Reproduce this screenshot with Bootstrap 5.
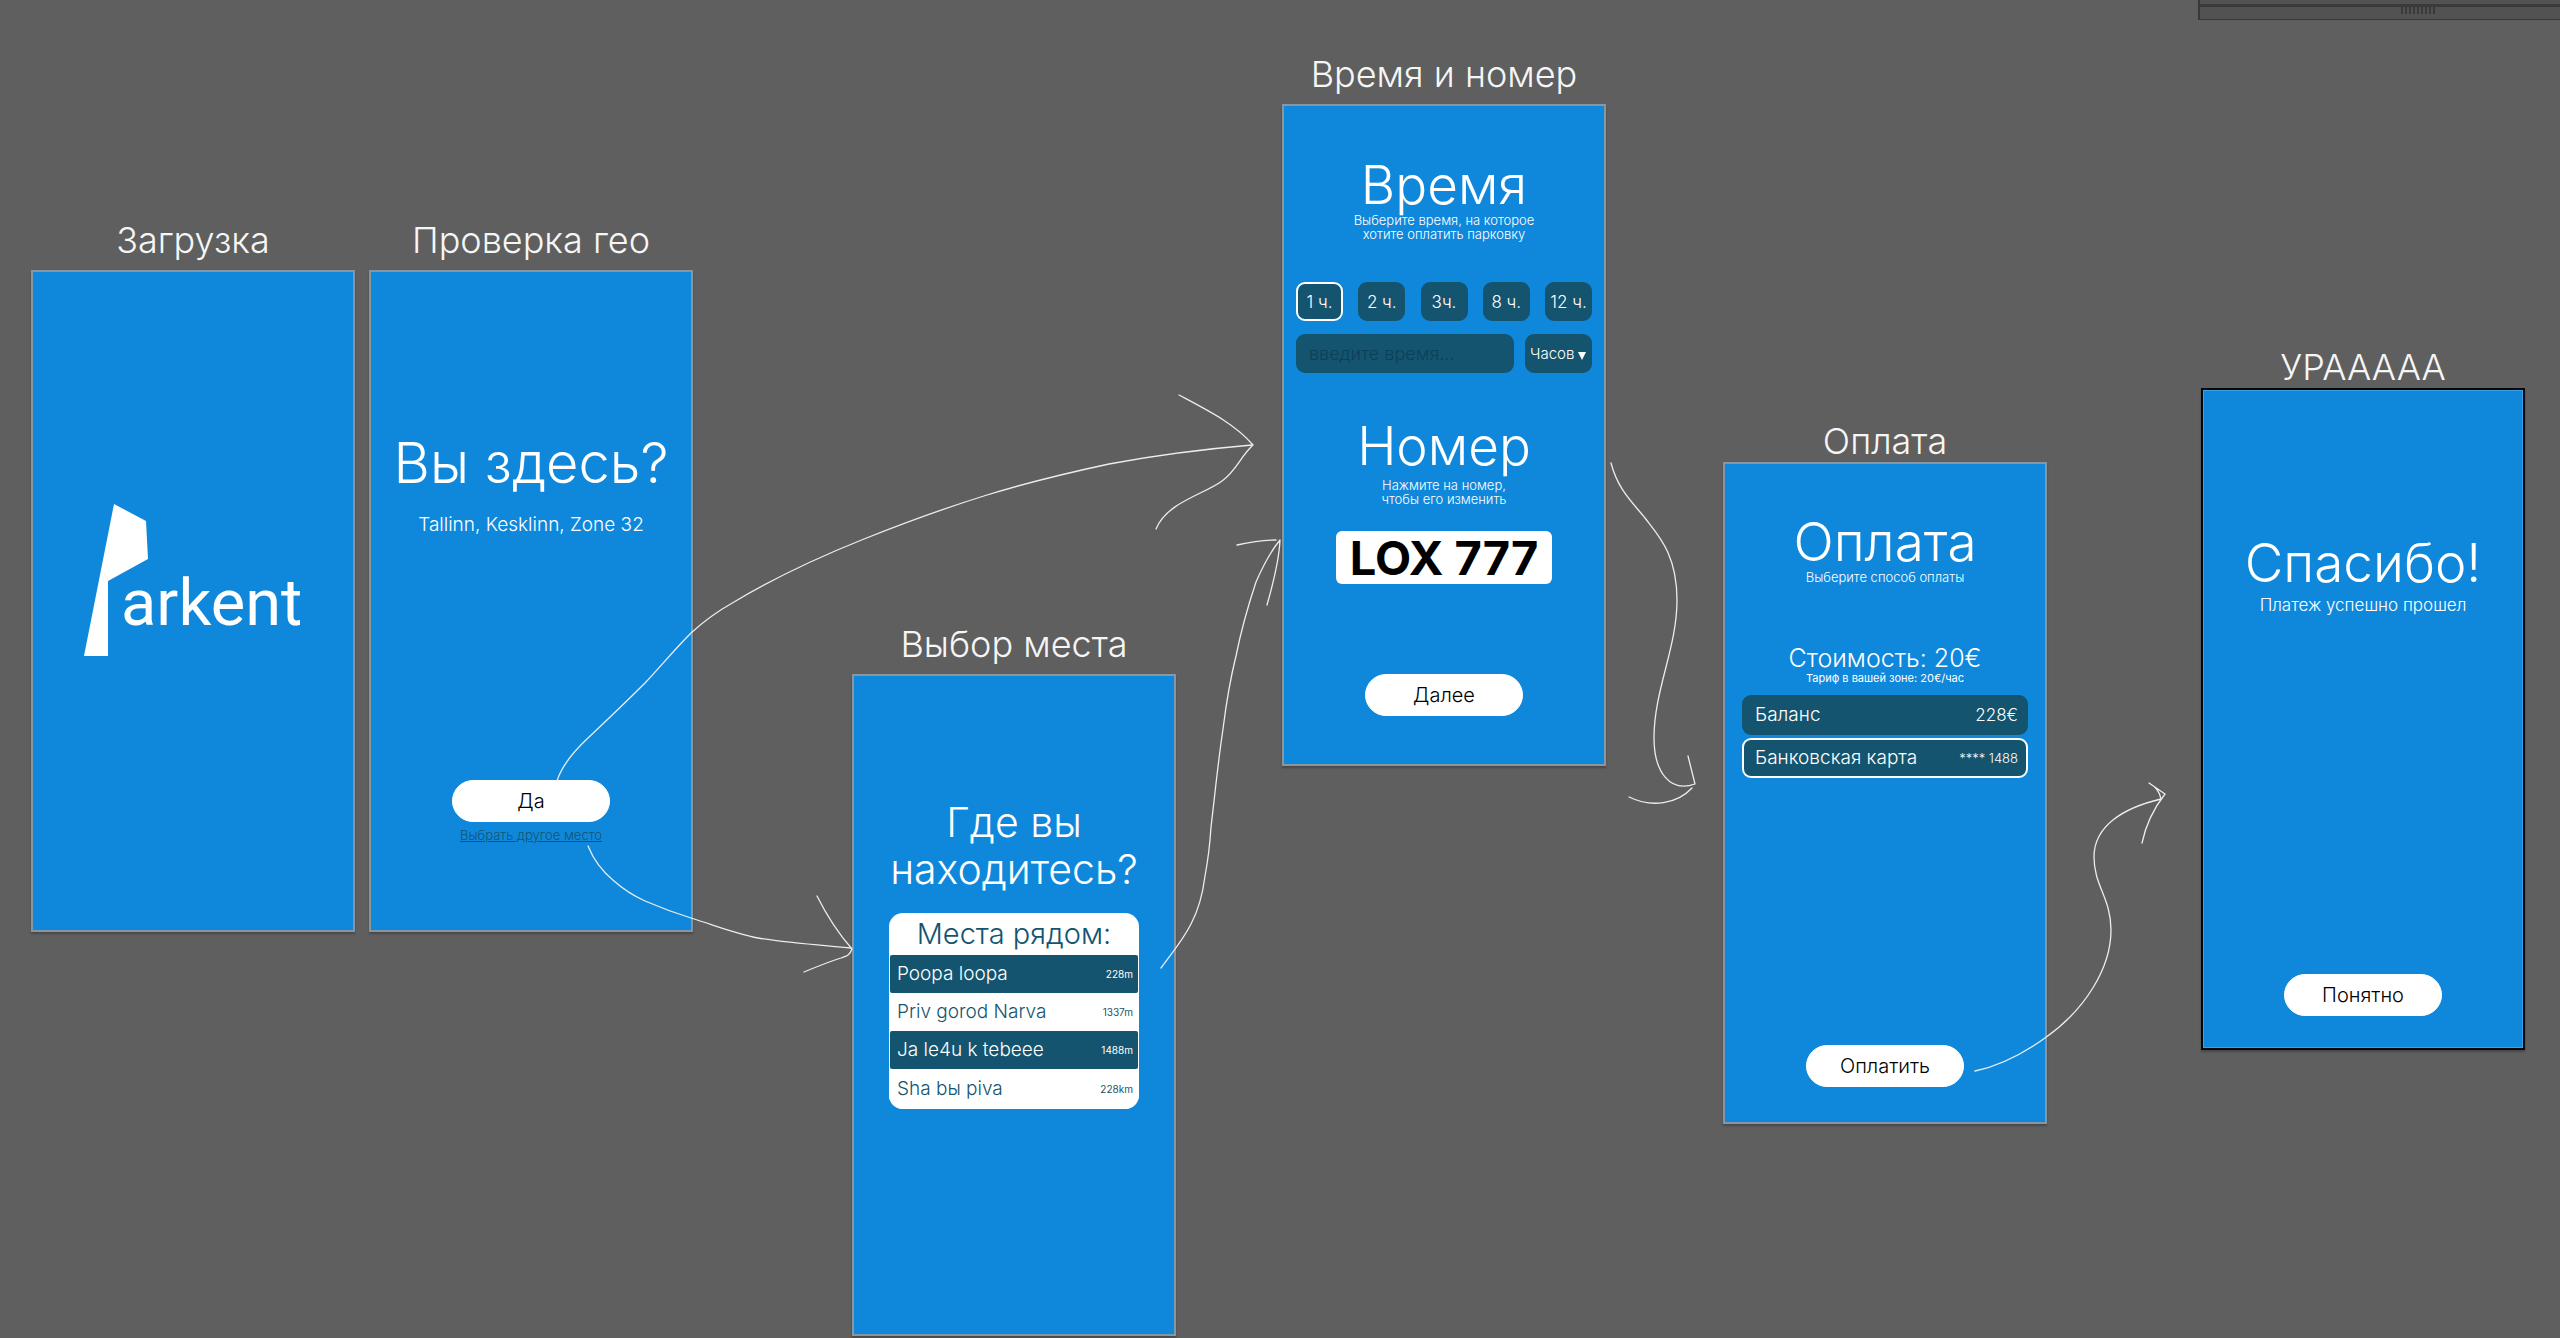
<!DOCTYPE html>
<html lang="ru">
<head>
<meta charset="utf-8">
<meta name="viewport" content="width=device-width, initial-scale=1">
<title>Parkent</title>
<link rel="stylesheet" href="https://cdn.jsdelivr.net/npm/bootstrap@5.3.0/dist/css/bootstrap.min.css">
<style>
  :root { --sky: #0f88dc; --deep: #14546f; --desk: #5f5f5f; }
  body { background: var(--desk); font-family: Inter, "Noto Sans", sans-serif; font-weight: 300; color: #fff; }

  /* free canvas with artboards */
  .desk { min-height: 100vh; }
  .artboard { width: 324px; }
  .artboard-title { font-size: 36px; line-height: 40px; font-weight: 300; margin-bottom: 10px; color: #f6f6f6; white-space: nowrap; }
  .title-tight .artboard-title { margin-bottom: 1px; }
  .screen { height: 662px; background: var(--sky); border: 2px solid #8796a0; box-shadow: 0 2px 2px 0 rgba(0,0,0,.25); }
  .screen-active { border-color: #05070a; box-shadow: 0 2px 2px 0 rgba(0,0,0,.25), inset 0 0 0 1px #3d9fe4; }
  .at-load { left: 31px; top: 220px; }
  .at-geo { left: 369px; top: 220px; }
  .at-place { left: 852px; top: 624px; }
  .at-time { left: 1282px; top: 54px; }
  .at-pay { left: 1723px; top: 421px; }
  .at-done { left: 2201px; top: 347px; }

  /* type */
  .head-xl { font-size: 56px; line-height: 60px; }
  .head-lg { font-size: 53px; line-height: 56px; }
  .head-md { font-size: 41px; line-height: 47px; }
  .head-xl, .head-lg, .head-md, .head-sm { font-weight: 300; margin-bottom: 0; }
  .head-sm { font-size: 29px; line-height: 42px; color: var(--deep); }
  .cost { font-size: 25px; line-height: 28px; margin: 60px 0 0; }
  .address { font-size: 19px; line-height: 24px; margin: 20px 0 0; }
  .hint { font-size: 13px; line-height: 14px; margin: 0; }
  .tariff { font-size: 11px; line-height: 12px; font-weight: 400; margin: 0; }
  .done-note { font-size: 17px; line-height: 22px; margin: 3px 0 0; }

  /* vertical rhythm of each screen */
  .geo-screen { padding: 161px 0 87px; }
  .place-screen { padding: 123px 35px 0; }
  .time-screen { padding: 51px 12px 48px; }
  .pay-screen { padding: 50px 17px 35px; }
  .done-screen { padding: 145px 0 32px; }
  .load-screen { padding-bottom: 42px; }

  .btn-pill { --bs-btn-bg: #fff; --bs-btn-color: #000; --bs-btn-border-color: #fff; --bs-btn-hover-bg: #e9f4fc;
    --bs-btn-font-weight: 300; width: 158px; height: 42px; padding: 0; font-size: 20px; line-height: 24px; }
  .other-link { font-size: 13px; line-height: 16px; color: var(--deep); margin-top: 5px; }

  .places { border-radius: 14px; margin-top: 20px; color: var(--deep); --bs-list-group-bg: #fff; }
  .places .list-group-item { border: 0; height: 38px; padding: 0 6px 0 8px; font-size: 19px; line-height: 24px; color: var(--deep); }
  .places .list-group-item:nth-child(odd) { background: var(--deep); color: #fff; margin: 0 1px; padding: 0 5px 0 7px; border-radius: 2px; }
  .places .list-group-item:last-child { height: 40px; }
  .places .dist { font-size: 10px; font-weight: 400; }

  .slot { background: var(--deep); color: #fff; border: 2px solid var(--deep); border-radius: 9px; height: 39px; cursor: pointer;
    font-size: 18px; line-height: 22px; }
  .btn-check:checked + .slot { border-color: #fff; }
  .hour-slot { width: 47px; font-size: 17px; }
  .hours { margin-top: 41px; }
  .custom-time { margin-top: 13px; gap: 11px; }
  .time-input { min-width: 0; padding: 0 11px; font-weight: 300; outline-color: #fff; }
  .time-input::placeholder { color: #0b4158; opacity: 1; }
  .unit-select { appearance: none; width: 67px; padding: 0 0 0 3px; font-size: 15px; font-weight: 300; }
  .unit-caret { right: 6px; top: 18px; width: 8px; height: 8px; pointer-events: none; }
  .number-head { margin-top: 45px; }
  .number-hint { margin-top: 4px; }
  .plate { width: 216px; height: 53px; margin-top: 25px; border: 0; border-radius: 6px; background: #fff; color: #000;
    font-size: 47px; font-weight: 700; line-height: 53px; padding: 0; text-align: center; }

  .methods { margin-top: 11px; gap: 3px; }
  .method { padding: 0 8px 0 11px; font-size: 19px; height: 40px; }
  .method .balance-tail { font-size: 17px; }
  .method .card-tail { font-size: 13px; }

  .logo-word { font: 400 65px Roboto, sans-serif; }

  /* docked panel of the editor */
  .dock { right: 0; top: 0; width: 362px; height: 20px; background: #525252; border: 1px solid #383838; border-width: 0 0 1px 2px; }
  .dock-bar { height: 3px; background: #3a3a3a; margin-top: 4px; }
  .dock-grip { width: 34px; height: 7px; margin-left: 201px; background: repeating-linear-gradient(90deg, #3a3a3a 0 2px, transparent 2px 4px); }
  .flow-lines { left: 0; top: 0; pointer-events: none; }
</style>
</head>
<body>
<main class="desk position-relative overflow-hidden">

  <section class="artboard at-load position-absolute text-center">
    <h2 class="artboard-title">Загрузка</h2>
    <div class="screen load-screen d-flex align-items-center justify-content-center">
      <svg width="218" height="152" viewBox="0 0 218 152" overflow="visible" role="img" aria-label="Parkent">
        <path fill="#fff" d="M30 0 62 17 64 55 24 77V152H0Z"/>
        <text class="logo-word" x="37" y="121" fill="#fff">arkent</text>
      </svg>
    </div>
  </section>

  <section class="artboard at-geo position-absolute text-center">
    <h2 class="artboard-title">Проверка гео</h2>
    <div class="screen geo-screen d-flex flex-column align-items-center">
      <h3 class="head-xl">Вы здесь?</h3>
      <p class="address">Tallinn, Kesklinn, Zone 32</p>
      <button type="button" class="btn btn-pill rounded-pill mt-auto">Да</button>
      <a href="#place" class="other-link">Выбрать другое место</a>
    </div>
  </section>

  <section id="place" class="artboard at-place position-absolute text-center">
    <h2 class="artboard-title">Выбор места</h2>
    <div class="screen place-screen">
      <h3 class="head-md">Где вы<br>находитесь?</h3>
      <div class="places bg-white overflow-hidden">
        <h4 class="head-sm">Места рядом:</h4>
        <ul class="list-group list-group-flush">
          <li class="list-group-item d-flex justify-content-between align-items-center"><span>Poopa loopa</span><span class="dist">228m</span></li>
          <li class="list-group-item d-flex justify-content-between align-items-center"><span>Priv gorod Narva</span><span class="dist">1337m</span></li>
          <li class="list-group-item d-flex justify-content-between align-items-center"><span>Ja le4u k tebeee</span><span class="dist">1488m</span></li>
          <li class="list-group-item d-flex justify-content-between align-items-center"><span>Sha bы piva</span><span class="dist">228km</span></li>
        </ul>
      </div>
    </div>
  </section>

  <section class="artboard at-time position-absolute text-center">
    <h2 class="artboard-title">Время и номер</h2>
    <form class="screen time-screen d-flex flex-column align-items-center">
      <h3 class="head-lg">Время</h3>
      <p class="hint">Выберите время, на которое<br>хотите оплатить парковку</p>
      <div class="hours d-flex justify-content-between w-100" role="radiogroup" aria-label="Время">
        <input type="radio" class="btn-check" name="hours" id="h1" checked><label class="slot hour-slot d-flex align-items-center justify-content-center text-nowrap" for="h1">1 ч.</label>
        <input type="radio" class="btn-check" name="hours" id="h2"><label class="slot hour-slot d-flex align-items-center justify-content-center text-nowrap" for="h2">2 ч.</label>
        <input type="radio" class="btn-check" name="hours" id="h3"><label class="slot hour-slot d-flex align-items-center justify-content-center text-nowrap" for="h3">3ч.</label>
        <input type="radio" class="btn-check" name="hours" id="h8"><label class="slot hour-slot d-flex align-items-center justify-content-center text-nowrap" for="h8">8 ч.</label>
        <input type="radio" class="btn-check" name="hours" id="h12"><label class="slot hour-slot d-flex align-items-center justify-content-center text-nowrap" for="h12">12 ч.</label>
      </div>
      <div class="custom-time d-flex w-100">
        <input type="text" class="slot time-input flex-fill" placeholder="введите время..." aria-label="введите время">
        <div class="position-relative">
          <select class="slot unit-select" aria-label="Единица времени"><option>Часов</option></select>
          <svg class="unit-caret position-absolute" viewBox="0 0 8 8" aria-hidden="true"><path fill="#fff" d="M0 0H8L4 8Z"/></svg>
        </div>
      </div>
      <h3 class="head-lg number-head">Номер</h3>
      <p class="hint number-hint">Нажмите на номер,<br>чтобы его изменить</p>
      <input type="text" class="plate" value="LOX 777" aria-label="Номер">
      <button type="button" class="btn btn-pill rounded-pill mt-auto">Далее</button>
    </form>
  </section>

  <section class="artboard at-pay title-tight position-absolute text-center">
    <h2 class="artboard-title">Оплата</h2>
    <form class="screen pay-screen d-flex flex-column align-items-center">
      <h3 class="head-lg">Оплата</h3>
      <p class="hint">Выберите способ оплаты</p>
      <p class="cost">Стоимость: 20€</p>
      <p class="tariff">Тариф в вашей зоне: 20€/час</p>
      <div class="methods d-flex flex-column w-100" role="radiogroup" aria-label="Способ оплаты">
        <input type="radio" class="btn-check" name="method" id="m-balance"><label class="slot method d-flex align-items-center justify-content-between" for="m-balance"><span>Баланс</span><span class="balance-tail">228€</span></label>
        <input type="radio" class="btn-check" name="method" id="m-card" checked><label class="slot method d-flex align-items-center justify-content-between" for="m-card"><span>Банковская карта</span><span class="card-tail">**** 1488</span></label>
      </div>
      <button type="button" class="btn btn-pill rounded-pill mt-auto">Оплатить</button>
    </form>
  </section>

  <section class="artboard at-done title-tight position-absolute text-center">
    <h2 class="artboard-title">УРААААА</h2>
    <div class="screen screen-active done-screen d-flex flex-column align-items-center">
      <h3 class="head-lg">Спасибо!</h3>
      <p class="done-note">Платеж успешно прошел</p>
      <button type="button" class="btn btn-pill rounded-pill mt-auto">Понятно</button>
    </div>
  </section>

  <!-- arrows between the screens -->
  <svg class="flow-lines position-absolute" width="2560" height="1338" viewBox="0 0 2560 1338" fill="none" stroke="#e9eef0" stroke-width="1.3" stroke-linecap="round" stroke-linejoin="round" aria-hidden="true">
    <path d="M557 781C562 765 573 752 588 738C606 721 626 702 645 683C660 667 675 649 691 633C704 621 718 611 734 602C774 578 819 557 864 539C904 523 945 508 987 495C1026 483 1067 473 1109 464C1157 455 1205 449 1252 445"/>
    <path d="M1179 395C1209 411 1235 424 1253 445C1240 457 1237 470 1222 481C1205 494 1167 502 1156 529"/>
    <path d="M588 846C594 861 603 872 614 881C623 889 634 896 645 901C659 907 675 913 691 918C714 925 736 934 758 938C789 943 820 945 851 948"/>
    <path d="M817 896C827 916 838 933 852 949C850 955 847 956 841 958C828 962 816 967 804 972"/>
    <path d="M1161 968C1172 953 1183 940 1191 924C1199 909 1203 892 1205 876C1208 860 1210 843 1211 827C1215 794 1218 762 1223 729C1226 705 1230 680 1236 656C1241 631 1248 606 1256 582C1263 566 1270 552 1280 540C1279 562 1273 584 1267 605M1237 545C1250 542 1263 540 1276 540"/>
    <path d="M1611 463C1618 490 1633 503 1645 518C1657 534 1677 553 1677 600C1677 648 1654 690 1654 738C1654 772 1670 793 1695 784L1688 756M1629 797C1652 808 1677 804 1692 788"/>
    <path d="M1975 1071C1999 1066 2024 1053 2045 1038C2085 1010 2111 968 2111 930C2111 898 2094 886 2094 857C2094 826 2123 808 2161 799C2160 793 2156 787 2149 783L2165 794C2154 808 2146 824 2142 843"/>
  </svg>

  <div class="dock position-absolute" aria-hidden="true">
    <div class="dock-bar"></div>
    <div class="dock-grip"></div>
  </div>
</main>
<script src="https://cdn.jsdelivr.net/npm/bootstrap@5.3.0/dist/js/bootstrap.bundle.min.js"></script>
</body>
</html>
